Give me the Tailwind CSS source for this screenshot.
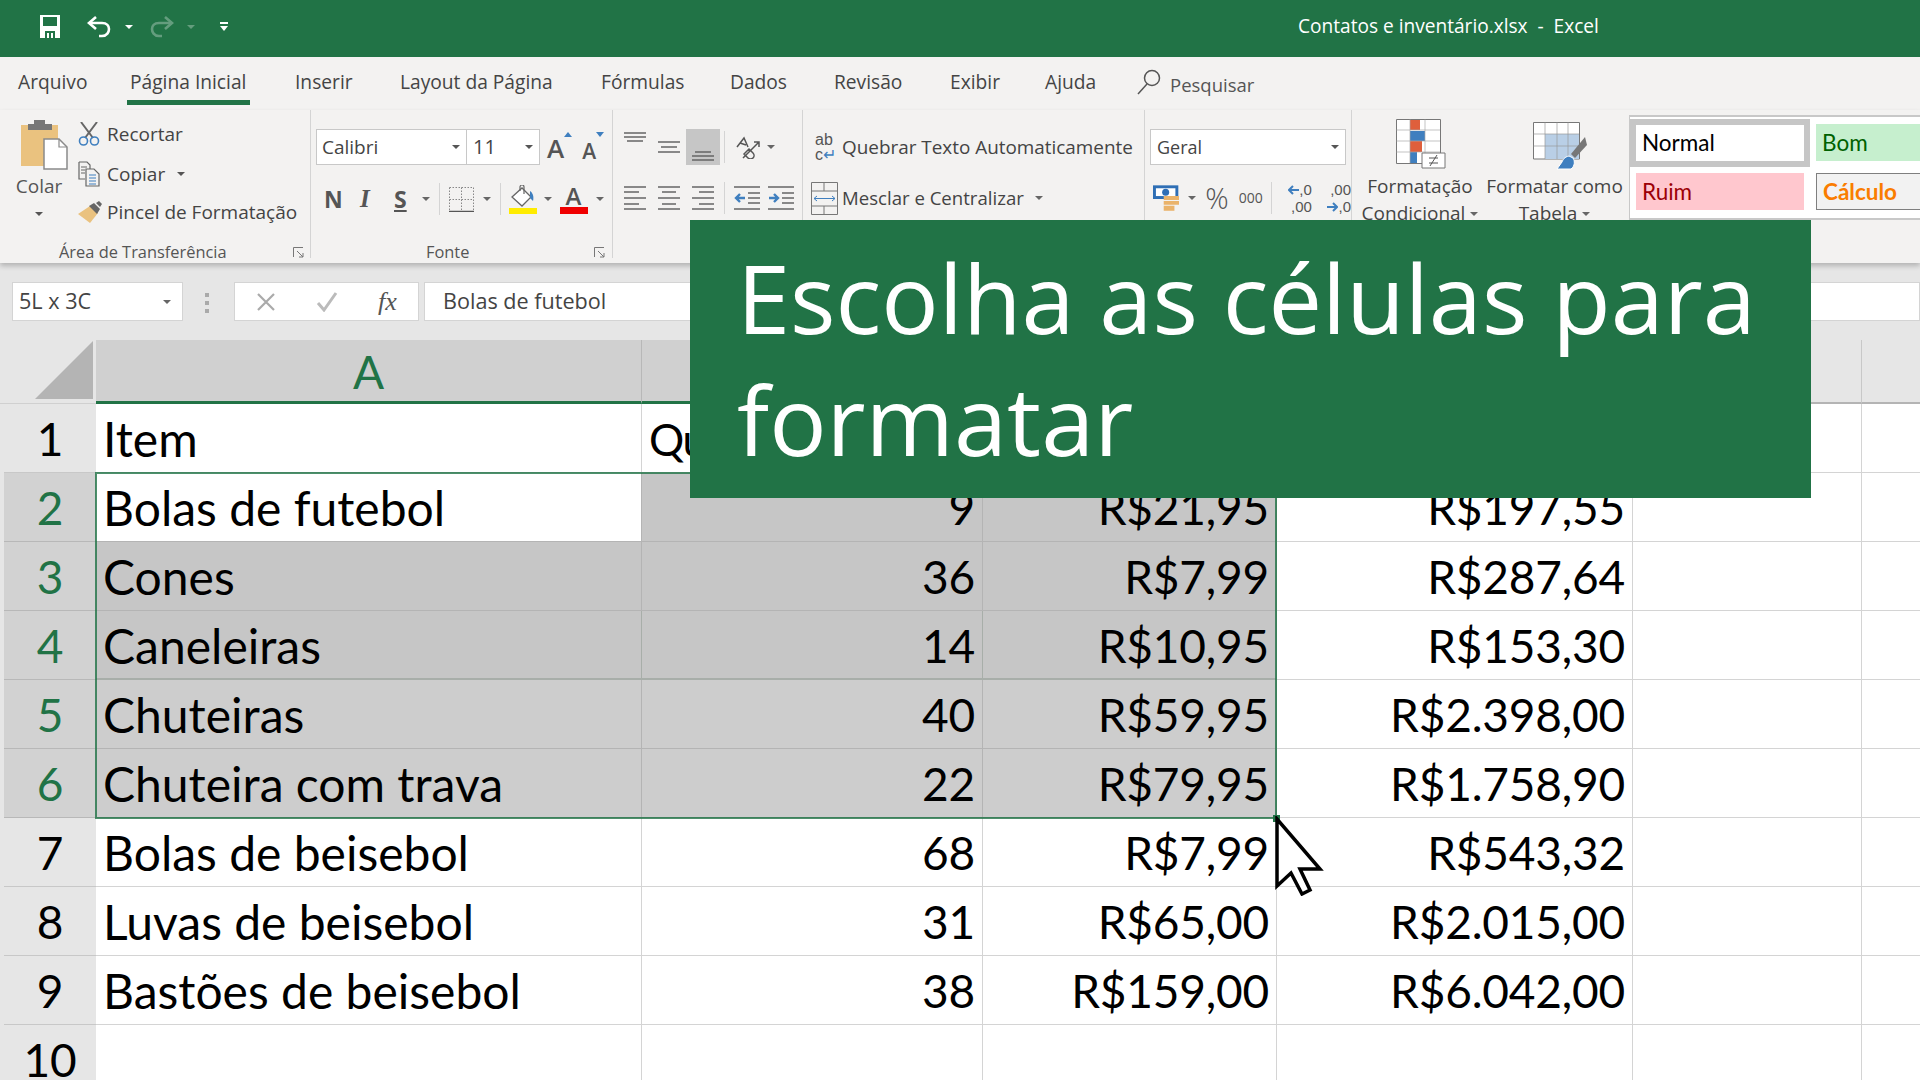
<!DOCTYPE html>
<html lang="pt-BR">
  <head>
    <meta charset="UTF-8" />
    <title>Contatos e inventário.xlsx - Excel</title>
    <script src="https://cdn.jsdelivr.net/npm/@tailwindcss/browser@4"></script>
  </head>
  <body class="w-[1920px] h-[1080px] overflow-hidden relative bg-[#e6e6e6] font-['Open_Sans',sans-serif] text-[#444]">
    <!-- title bar -->
    <header class="h-[57px] pb-[4px] bg-[#217346] flex items-center text-white relative">
      <svg class="ml-[40px] w-[20px] h-[23px]" viewBox="0 0 20 23"><path d="M0 0H20V23H0Z" fill="#fff"/><path d="M3 2H17V11H3Z" fill="#217346"/><path d="M5 16H15V23H5Z" fill="#217346"/><path d="M7 18H9V23H7ZM11 18H13V23H11Z" fill="#fff"/></svg>
      <svg class="ml-[27px] w-[24px] h-[24px]" viewBox="0 0 24 24" fill="none" stroke="#fff" stroke-width="2.6"><path d="M9 2 2 8l7 6"/><path d="M2 8h13c5 0 7 3 7 6s-2 7-7 7h-3"/></svg>
      <span class="ml-[14px] border-x-[4px] border-t-[4px] border-x-transparent border-t-white"></span>
      <svg class="ml-[17px] w-[24px] h-[24px] opacity-30" viewBox="0 0 24 24" fill="none" stroke="#fff" stroke-width="2.6"><path d="M15 2l7 6-7 6"/><path d="M22 8H9c-5 0-7 3-7 6s2 7 7 7h3"/></svg>
      <span class="ml-[13px] border-x-[4px] border-t-[4px] border-x-transparent border-t-white/30"></span>
      <span class="ml-[25px] flex flex-col items-center gap-[2px]"><span class="w-[8px] h-[2px] bg-white"></span><span class="border-x-[4px] border-t-[5px] border-x-transparent border-t-white"></span></span>
      <span class="absolute left-[1298px] top-[14px] text-[19.1px] leading-[25px] whitespace-pre">Contatos e inventário.xlsx  -  Excel</span>
    </header>

    <!-- tabs -->
    <nav class="h-[53px] bg-[#f3f2f1] pl-[18px] flex items-start pt-[12px] text-[19.2px] leading-[26px]">
      <span class="w-[112px]">Arquivo</span>
      <span class="w-[165px] relative">Página Inicial<span class="absolute left-[-3px] w-[123px] top-[31px] h-[5px] bg-[#217346]"></span></span>
      <span class="w-[105px]">Inserir</span>
      <span class="w-[201px]">Layout da Página</span>
      <span class="w-[129px]">Fórmulas</span>
      <span class="w-[104px]">Dados</span>
      <span class="w-[116px]">Revisão</span>
      <span class="w-[95px]">Exibir</span>
      <span class="w-[92px]">Ajuda</span>
      <svg class="w-[24px] h-[26px] mr-[9px]" viewBox="0 0 24 26" fill="none" stroke="#555" stroke-width="1.5"><circle cx="15" cy="9" r="7.5"/><path d="M10 15 1 25"/></svg>
      <span class="mt-[3px] text-[18.5px] text-[#555]">Pesquisar</span>
    </nav>

    <!-- ribbon -->
    <section class="h-[153px] bg-[#f3f2f1] flex shadow-[0_3px_5px_rgba(0,0,0,0.22)] relative text-[19px] leading-[24px]">
      <!-- area de transferencia -->
      <div class="w-[311px] h-[148px] border-r border-[#d4d4d4] flex flex-col">
        <div class="h-[128px] shrink-0 flex">
          <div class="w-[78px] flex flex-col items-center pt-[9px]">
            <svg class="w-[50px] h-[52px] ml-[8px]" viewBox="0 0 50 52"><path d="M3 6H40V47H3Z" fill="#eac27f"/><path d="M10 5H16V1H27V5H34V11H10Z" fill="#777"/><path d="M26 20H41L49 28V50H26Z" fill="#fff" stroke="#8a8a8a" stroke-width="1.5"/><path d="M41 20V28H49" fill="none" stroke="#8a8a8a" stroke-width="1.2"/></svg>
            <span class="mt-[3px] text-[#555]">Colar</span>
            <span class="mt-[14px] border-x-[4px] border-t-[4px] border-x-transparent border-t-[#555]"></span>
          </div>
          <div class="pt-[4px] flex flex-col">
            <div class="h-[40px] flex items-center"><svg class="w-[22px] h-[24px]" viewBox="0 0 22 24" fill="none"><path d="M3 0 15 16M19 0 7 16" stroke="#666" stroke-width="2"/><circle cx="5.5" cy="19" r="4" stroke="#3f7fbf" stroke-width="1.6"/><circle cx="16.5" cy="19" r="4" stroke="#3f7fbf" stroke-width="1.6"/></svg><span class="ml-[7px]">Recortar</span></div>
            <div class="h-[39px] flex items-center"><svg class="w-[22px] h-[26px]" viewBox="0 0 22 26" fill="none" stroke="#666" stroke-width="1.2"><path d="M1 1H9L12 4V8M1 1V18H7"/><path d="M3 6H9M3 9H7M3 12H7"/><path d="M8 8H16L21 13V25H8Z" fill="#f3f2f1"/><path d="M11 14H18M11 17H18M11 20H18M11 23H18" stroke="#3f7fbf"/></svg><span class="ml-[7px]">Copiar</span><span class="ml-[12px] border-x-[4px] border-t-[4px] border-x-transparent border-t-[#555]"></span></div>
            <div class="h-[38px] flex items-center"><svg class="w-[24px] h-[23px]" viewBox="0 0 24 23"><path d="M0 13 12 5l8 7-8 10Z" fill="#eac27f"/><path d="M11 5 16 2l6 6-3 5Z" fill="#666"/><path d="M18 2l3-2 3 3-2 3Z" fill="#666"/></svg><span class="ml-[5px]">Pincel de Formatação</span></div>
          </div>
        </div>
        <div class="flex items-center h-[28px] shrink-0 text-[16.4px] text-[#555]">
          <span class="ml-[59px] w-[234px]">Área de Transferência</span>
          <svg class="w-[11px] h-[11px]" viewBox="0 0 11 11" fill="none" stroke="#777"><path d="M.5 10V.5H10M4 4l6 6M6 10h4V6"/></svg>
        </div>
      </div>

      <!-- fonte -->
      <div class="w-[302px] h-[148px] border-r border-[#d4d4d4] flex flex-col pl-[5px]">
        <div class="h-[128px] shrink-0 pt-[19px]">
          <div class="flex items-start">
            <div class="w-[151px] h-[36px] bg-white border border-[#c8c8c8] flex items-center justify-between pl-[5px] pr-[6px]"><span>Calibri</span><span class="border-x-[4px] border-t-[4px] border-x-transparent border-t-[#555]"></span></div>
            <div class="w-[73px] h-[36px] bg-white border border-l-0 border-[#c8c8c8] flex items-center justify-between pl-[6px] pr-[6px]"><span class="text-[20px]">11</span><span class="border-x-[4px] border-t-[4px] border-x-transparent border-t-[#555]"></span></div>
            <span class="ml-[7px] mt-[2px] text-[26px] leading-[34px] text-[#555] font-semibold">A</span>
            <span class="mt-[3px] border-x-[4px] border-b-[5px] border-x-transparent border-b-[#3f7fbf]"></span>
            <span class="ml-[10px] mt-[7px] text-[21px] leading-[30px] text-[#555] font-semibold">A</span>
            <span class="mt-[3px] border-x-[4px] border-t-[5px] border-x-transparent border-t-[#3f7fbf]"></span>
          </div>
          <div class="mt-[8px] h-[50px] flex items-center text-[#555]">
            <span class="ml-[8px] w-[36px] text-[23px] font-bold">N</span>
            <span class="w-[34px] text-[25px] font-bold italic font-['Liberation_Serif',serif]">I</span>
            <span class="w-[28px] text-[23px] font-bold underline">S</span>
            <span class="border-x-[4px] border-t-[4px] border-x-transparent border-t-[#666]"></span>
            <span class="ml-[9px] w-px h-[32px] bg-[#d4d4d4]"></span>
            <svg class="ml-[9px] w-[25px] h-[25px]" viewBox="0 0 25 25" fill="none" stroke="#888" stroke-dasharray="1.5 1.5"><path d="M.5.5H24.5V24M.5.5V24M12.5.5V24M.5 12.5H24.5"/><path d="M0 24.5H25" stroke="#555" stroke-width="1.5" stroke-dasharray="none"/></svg>
            <span class="ml-[9px] border-x-[4px] border-t-[4px] border-x-transparent border-t-[#666]"></span>
            <span class="ml-[9px] w-px h-[32px] bg-[#d4d4d4]"></span>
            <svg class="ml-[8px] w-[28px] h-[29px]" viewBox="0 0 28 29"><path d="M3 12 13 3l9 9-9 9Z" fill="#fff" stroke="#666" stroke-width="1.3"/><path d="M11 6V2a2 2 0 0 1 4 0V9" fill="none" stroke="#666" stroke-width="1.2"/><path d="M21 6c3 2 4 6 3 10l-3-3Z" fill="#3f7fbf"/><path d="M0 23H28V29H0Z" fill="#ffec00"/></svg>
            <span class="ml-[7px] border-x-[4px] border-t-[4px] border-x-transparent border-t-[#666]"></span>
            <span class="ml-[7px] flex flex-col items-center w-[29px]"><span class="text-[24px] leading-[23px] font-semibold">A</span><span class="w-[28px] h-[7px] bg-[#f00000]"></span></span>
            <span class="ml-[8px] border-x-[4px] border-t-[4px] border-x-transparent border-t-[#666]"></span>
          </div>
        </div>
        <div class="flex items-center h-[28px] shrink-0 text-[16.4px] text-[#555]">
          <span class="ml-[110px] w-[168px]">Fonte</span>
          <svg class="w-[11px] h-[11px]" viewBox="0 0 11 11" fill="none" stroke="#777"><path d="M.5 10V.5H10M4 4l6 6M6 10h4V6"/></svg>
        </div>
      </div>

      <!-- alinhamento -->
      <div class="w-[190px] h-[148px] border-r border-[#d4d4d4] pt-[19px] pl-[5px]">
        <div class="flex items-center h-[36px]">
          <span class="w-[34px] h-[36px] flex items-start justify-center pt-[3px]"><svg class="w-[22px] h-[12px]" viewBox="0 0 22 12" stroke="#666" stroke-width="1.3"><path d="M0 1H22M0 5H22M3 9H19"/></svg></span>
          <span class="w-[34px] h-[36px] flex items-center justify-center"><svg class="w-[22px] h-[12px]" viewBox="0 0 22 12" stroke="#666" stroke-width="1.3"><path d="M0 1H22M3 6H19M0 11H22"/></svg></span>
          <span class="w-[34px] h-[36px] bg-[#c6c6c6] flex items-end justify-center pb-[4px]"><svg class="w-[22px] h-[12px]" viewBox="0 0 22 12" stroke="#666" stroke-width="1.3"><path d="M3 3H19M0 7H22M0 11H22"/></svg></span>
          <span class="ml-[4px] w-px h-[32px] bg-[#d4d4d4]"></span>
          <svg class="ml-[11px] w-[24px] h-[24px]" viewBox="0 0 24 24" fill="none" stroke="#555" stroke-width="1.5"><path d="M7 23 23 7M18 7h5v5"/><path d="M1 12 8 3l4 9M4 8l6 2"/><path d="M8 19l5-5 4 4a3 3 0 0 1-5 5Z"/></svg>
          <span class="ml-[7px] border-x-[4px] border-t-[4px] border-x-transparent border-t-[#666]"></span>
        </div>
        <div class="mt-[8px] h-[50px] flex items-center">
          <span class="w-[34px] flex justify-center"><svg class="w-[22px] h-[24px]" viewBox="0 0 22 24" stroke="#666" stroke-width="1.3"><path d="M0 1H22M0 6H15M0 12H22M0 18H15M0 23H22"/></svg></span>
          <span class="w-[34px] flex justify-center"><svg class="w-[22px] h-[24px]" viewBox="0 0 22 24" stroke="#666" stroke-width="1.3"><path d="M0 1H22M4 6H18M0 12H22M4 18H18M0 23H22"/></svg></span>
          <span class="w-[34px] flex justify-center"><svg class="w-[22px] h-[24px]" viewBox="0 0 22 24" stroke="#666" stroke-width="1.3"><path d="M0 1H22M7 6H22M0 12H22M7 18H22M0 23H22"/></svg></span>
          <span class="ml-[4px] w-px h-[32px] bg-[#d4d4d4]"></span>
          <svg class="ml-[9px] w-[26px] h-[24px]" viewBox="0 0 26 24" fill="none"><path d="M0 1H26M14 7H26M14 12H26M14 17H26M0 23H26" stroke="#666" stroke-width="1.3"/><path d="M11 12H3M6 8l-4 4 4 4" stroke="#3f7fbf" stroke-width="2.4"/></svg>
          <svg class="ml-[8px] w-[26px] h-[24px]" viewBox="0 0 26 24" fill="none"><path d="M0 1H26M14 7H26M14 12H26M14 17H26M0 23H26" stroke="#666" stroke-width="1.3"/><path d="M1 12H9M6 8l4 4-4 4" stroke="#3f7fbf" stroke-width="2.4"/></svg>
        </div>
      </div>

      <!-- quebrar / mesclar -->
      <div class="w-[342px] h-[148px] border-r border-[#d4d4d4] pl-[8px] pt-[19px]">
        <div class="h-[36px] flex items-center"><span class="w-[31px] pl-[4px] text-[16px] leading-[15px] font-['Liberation_Sans',sans-serif] text-[#555]">ab<br />c<span class="text-[#3f7fbf]">↵</span></span><span class="text-[18.9px]">Quebrar Texto Automaticamente</span></div>
        <div class="mt-[8px] h-[50px] flex items-center"><svg class="w-[27px] h-[33px] mr-[4px]" viewBox="0 0 27 33" fill="none" stroke="#777"><path d="M.5.5H26.5V32.5H.5ZM.5 9H26.5M.5 24H26.5M13 .5V9M13 24V32.5"/><path d="M3 16.5H24M6 14l-3 2.5L6 19M21 14l3 2.5-3 2.5" stroke="#3f7fbf"/></svg><span class="text-[18.6px]">Mesclar e Centralizar</span><span class="ml-[11px] border-x-[4px] border-t-[4px] border-x-transparent border-t-[#666]"></span></div>
      </div>

      <!-- numero -->
      <div class="w-[207px] h-[148px] border-r border-[#d4d4d4] pl-[5px] pt-[19px]">
        <div class="w-[196px] h-[36px] bg-white border border-[#c8c8c8] flex items-center justify-between pl-[6px] pr-[6px] text-[18px]"><span>Geral</span><span class="border-x-[4px] border-t-[4px] border-x-transparent border-t-[#555]"></span></div>
        <div class="mt-[8px] h-[50px] flex items-center text-[#555]">
          <svg class="ml-[3px] w-[27px] h-[26px]" viewBox="0 0 27 26"><path d="M0 0H26V14H0Z" fill="#2f6fb5"/><path d="M3 3H23V11H3Z" fill="#fff"/><circle cx="13" cy="7" r="3.6" fill="#2f6fb5"/><path d="M11 11H27V15H11ZM11 16H27V20H11ZM11 21H22V26H11Z" fill="#eab36a"/></svg>
          <span class="ml-[9px] border-x-[4px] border-t-[4px] border-x-transparent border-t-[#666]"></span>
          <span class="ml-[9px] text-[29px] leading-[34px] font-light">%</span>
          <span class="ml-[10px] text-[14px]">000</span>
          <span class="ml-[8px] w-px h-[32px] bg-[#d4d4d4]"></span>
          <div class="ml-[7px] w-[34px] text-[15px] leading-[17px] font-['Liberation_Sans',sans-serif] flex flex-col items-end">
            <span class="flex items-center"><svg class="w-[11px] h-[10px]" viewBox="0 0 11 10" fill="none" stroke="#3f7fbf" stroke-width="2"><path d="M11 5H2M5 1 1 5l4 4"/></svg>,0</span>
            <span>,00</span>
          </div>
          <div class="ml-[8px] w-[32px] text-[15px] leading-[17px] font-['Liberation_Sans',sans-serif] flex flex-col items-end">
            <span>,00</span>
            <span class="flex items-center"><svg class="w-[11px] h-[10px]" viewBox="0 0 11 10" fill="none" stroke="#3f7fbf" stroke-width="2"><path d="M0 5H9M6 1l4 4-4 4"/></svg>,0</span>
          </div>
        </div>
      </div>

      <!-- estilos -->
      <div class="w-[136px] pt-[9px] flex flex-col items-center text-center leading-[27px]">
        <svg class="w-[50px] h-[50px] mb-[4px] ml-[2px]" viewBox="0 0 50 50"><path d="M.5.5H44.5V44.5H.5Z" fill="#fff" stroke="#777"/><path d="M14 1H24V11H14ZM14 22H26V33H14Z" fill="#df5f3c"/><path d="M14 12H29V22H14ZM14 33H21V44H14Z" fill="#3f7fbf"/><path d="M14 .5V44M29 .5V44M.5 11H44M.5 22H44M.5 33H44" fill="none" stroke="#aaa" stroke-width=".7"/><path d="M26 34H49V49H26Z" fill="#fff" stroke="#777"/><path d="M33 39H42M33 44H42M41 36 34 47" stroke="#555" fill="none"/></svg>
        <span class="whitespace-nowrap">Formatação</span>
        <span class="flex items-center gap-[5px] whitespace-nowrap">Condicional<span class="border-x-[4px] border-t-[4px] border-x-transparent border-t-[#666]"></span></span>
      </div>
      <div class="w-[133px] pt-[12px] flex flex-col items-center text-center leading-[27px]">
        <svg class="w-[54px] h-[48px] mb-[3px] ml-[11px]" viewBox="0 0 54 48"><path d="M.5.5H46.5V37H.5Z" fill="#fff" stroke="#777"/><path d="M12 12H46V37H12Z" fill="#b9cfe6"/><path d="M12 .5V37M24 .5V37M35 .5V37M.5 12H46M.5 24H46" fill="none" stroke="#999" stroke-width=".7"/><path d="M52 15 38 32l4 4 12-13Z" fill="#777"/><path d="M36 34c-5 1-6 4-7 6l-5 7h14c4-3 4-8 2-11Z" fill="#3f7fbf" stroke="#fff"/></svg>
        <span class="whitespace-nowrap">Formatar como</span>
        <span class="flex items-center gap-[5px] whitespace-nowrap">Tabela<span class="border-x-[4px] border-t-[4px] border-x-transparent border-t-[#666]"></span></span>
      </div>
      <div class="ml-[8px] mt-[5px] flex-1 min-w-0 h-[105px] bg-white border-t-2 border-l border-b-2 border-[#c8c8c8] text-[22.5px] font-['Lato',sans-serif] overflow-hidden">
        <div class="flex pt-[2px]">
          <div class="w-[180px] h-[48px] shrink-0 border-[6px] border-[#c6c6c6] bg-white text-black pl-[6px] flex items-center">Normal</div>
          <div class="ml-[6px] mt-[5px] w-[120px] h-[37px] shrink-0 bg-[#c6efce] text-[#006100] pl-[6px] flex items-center">Bom</div>
        </div>
        <div class="flex mt-[6px]">
          <div class="ml-[6px] w-[168px] h-[37px] shrink-0 bg-[#ffc7ce] text-[#9c0006] pl-[6px] flex items-center">Ruim</div>
          <div class="ml-[12px] w-[120px] h-[37px] shrink-0 bg-[#f2f2f2] border border-[#7f7f7f] text-[#fa7d00] font-bold pl-[6px] flex items-center">Cálculo</div>
        </div>
      </div>
    </section>

    <!-- barra de formula -->
    <div class="h-[77px] pt-[19px] pl-[12px] flex items-start text-[21.6px]">
      <div class="w-[171px] h-[39px] bg-white border border-[#d4d4d4] flex items-center justify-between pl-[6px] pr-[11px]"><span>5L x 3C</span><span class="border-x-[4px] border-t-[4px] border-x-transparent border-t-[#666]"></span></div>
      <span class="ml-[22px] mr-[25px] mt-[11px] flex flex-col gap-[4px]"><span class="w-[4px] h-[4px] bg-[#aaa]"></span><span class="w-[4px] h-[4px] bg-[#aaa]"></span><span class="w-[4px] h-[4px] bg-[#aaa]"></span></span>
      <div class="w-[185px] h-[39px] bg-white border border-[#d4d4d4] flex items-center pl-[21px]">
        <svg class="w-[20px] h-[20px]" viewBox="0 0 20 20" stroke="#aaa" stroke-width="2.2"><path d="M2 2 18 18M18 2 2 18"/></svg>
        <svg class="ml-[40px] w-[22px] h-[20px]" viewBox="0 0 22 20" fill="none" stroke="#bbb" stroke-width="3"><path d="M2 11 8 18 20 1"/></svg>
        <span class="ml-[40px] font-['Liberation_Serif',serif] italic text-[#555] text-[26px] leading-[28px]">fx</span>
      </div>
      <div class="ml-[5px] flex-1 h-[39px] bg-white border border-[#d4d4d4] flex items-center pl-[18px]">Bolas de futebol</div>
    </div>

    <!-- planilha -->
    <main class="font-['Lato',sans-serif] text-black text-[46px] leading-[70px] tracking-[-0.2px]">
      <div class="grid grid-cols-[96px_546px_341px_294px_356px_229px_58px] grid-rows-[64px]">
        <div class="flex items-end justify-end pr-[3px] pb-[4px] border-b border-[#d0d0d0]"><span class="border-l-[58px] border-b-[58px] border-l-transparent border-b-[#b4b4b4]"></span></div>
        <div class="bg-[#d0d0d0] border-r border-[#b8b8b8] border-b-[3px] border-b-[#217346] text-[#217346] text-center leading-[64px]">A</div>
        <div class="bg-[#d0d0d0] border-r border-[#b8b8b8] border-b-[3px] border-b-[#217346]"></div>
        <div class="bg-[#d0d0d0] border-r border-[#b8b8b8] border-b-[3px] border-b-[#217346]"></div>
        <div class="bg-[#e6e6e6] border-r border-[#c8c8c8] border-b-[2px] border-b-[#b4b4b4]"></div>
        <div class="bg-[#e6e6e6] border-r border-[#c8c8c8] border-b-[2px] border-b-[#b4b4b4]"></div>
        <div class="bg-[#e6e6e6] border-b-[2px] border-b-[#b4b4b4]"></div>
      </div>
      <div class="grid grid-cols-[96px_546px_341px_294px_356px_229px_58px] auto-rows-[69px]">
        <div class="ml-[4px] text-center border-b border-[#c8c8c8]">1</div>
        <div class="bg-white border-r border-b border-[#d4d4d4] pl-[7px] text-[48px] tracking-normal">Item</div>
        <div class="bg-white border-r border-b border-[#d4d4d4] pl-[7px] text-[44px] tracking-[-1.5px]">Qu</div>
        <div class="bg-white border-r border-b border-[#d4d4d4]"></div>
        <div class="bg-white border-r border-b border-[#d4d4d4]"></div>
        <div class="bg-white border-r border-b border-[#d4d4d4]"></div>
        <div class="bg-white border-b border-[#d4d4d4]"></div>

        <div class="ml-[4px] bg-[#d2d2d2] text-[#217346] text-center border-b border-[#b8b8b8]">2</div>
        <div class="bg-white border-r border-b border-[#b4b4b4] pl-[7px] text-[48px] tracking-normal">Bolas de futebol</div>
        <div class="bg-[#c6c6c6] border-r border-b border-[#b4b4b4] pr-[7px] text-right">9</div>
        <div class="bg-[#c6c6c6] border-r border-b border-[#b4b4b4] pr-[7px] text-right">R$21,95</div>
        <div class="bg-white border-r border-b border-[#d4d4d4] pr-[7px] text-right">R$197,55</div>
        <div class="bg-white border-r border-b border-[#d4d4d4]"></div>
        <div class="bg-white border-b border-[#d4d4d4]"></div>

        <div class="ml-[4px] bg-[#d2d2d2] text-[#217346] text-center border-b border-[#b8b8b8]">3</div>
        <div class="bg-[#c6c6c6] border-r border-b border-[#b4b4b4] pl-[7px] text-[48px] tracking-normal">Cones</div>
        <div class="bg-[#c6c6c6] border-r border-b border-[#b4b4b4] pr-[7px] text-right">36</div>
        <div class="bg-[#c6c6c6] border-r border-b border-[#b4b4b4] pr-[7px] text-right">R$7,99</div>
        <div class="bg-white border-r border-b border-[#d4d4d4] pr-[7px] text-right">R$287,64</div>
        <div class="bg-white border-r border-b border-[#d4d4d4]"></div>
        <div class="bg-white border-b border-[#d4d4d4]"></div>

        <div class="ml-[4px] bg-[#d2d2d2] text-[#217346] text-center border-b border-[#b8b8b8]">4</div>
        <div class="bg-[#c6c6c6] border-r border-b-2 border-[#a8aea9] pl-[7px] text-[48px] tracking-normal">Caneleiras</div>
        <div class="bg-[#c6c6c6] border-r border-b-2 border-[#a8aea9] pr-[7px] text-right">14</div>
        <div class="bg-[#c6c6c6] border-r border-b-2 border-[#a8aea9] pr-[7px] text-right">R$10,95</div>
        <div class="bg-white border-r border-b border-[#d4d4d4] pr-[7px] text-right">R$153,30</div>
        <div class="bg-white border-r border-b border-[#d4d4d4]"></div>
        <div class="bg-white border-b border-[#d4d4d4]"></div>

        <div class="ml-[4px] bg-[#d2d2d2] text-[#217346] text-center border-b border-[#b8b8b8]">5</div>
        <div class="bg-[#cdcdcd] border-r border-b border-[#b4b4b4] pl-[7px] text-[48px] tracking-normal">Chuteiras</div>
        <div class="bg-[#cdcdcd] border-r border-b border-[#b4b4b4] pr-[7px] text-right">40</div>
        <div class="bg-[#cdcdcd] border-r border-b border-[#b4b4b4] pr-[7px] text-right">R$59,95</div>
        <div class="bg-white border-r border-b border-[#d4d4d4] pr-[7px] text-right">R$2.398,00</div>
        <div class="bg-white border-r border-b border-[#d4d4d4]"></div>
        <div class="bg-white border-b border-[#d4d4d4]"></div>

        <div class="ml-[4px] bg-[#d2d2d2] text-[#217346] text-center border-b border-[#b8b8b8]">6</div>
        <div class="bg-[#cdcdcd] border-r border-b border-[#b4b4b4] pl-[7px] text-[48px] tracking-normal">Chuteira com trava</div>
        <div class="bg-[#cdcdcd] border-r border-b border-[#b4b4b4] pr-[7px] text-right">22</div>
        <div class="bg-[#cdcdcd] border-r border-b border-[#b4b4b4] pr-[7px] text-right">R$79,95</div>
        <div class="bg-white border-r border-b border-[#d4d4d4] pr-[7px] text-right">R$1.758,90</div>
        <div class="bg-white border-r border-b border-[#d4d4d4]"></div>
        <div class="bg-white border-b border-[#d4d4d4]"></div>

        <div class="ml-[4px] text-center border-b border-[#c8c8c8]">7</div>
        <div class="bg-white border-r border-b border-[#d4d4d4] pl-[7px] text-[48px] tracking-normal">Bolas de beisebol</div>
        <div class="bg-white border-r border-b border-[#d4d4d4] pr-[7px] text-right">68</div>
        <div class="bg-white border-r border-b border-[#d4d4d4] pr-[7px] text-right">R$7,99</div>
        <div class="bg-white border-r border-b border-[#d4d4d4] pr-[7px] text-right">R$543,32</div>
        <div class="bg-white border-r border-b border-[#d4d4d4]"></div>
        <div class="bg-white border-b border-[#d4d4d4]"></div>

        <div class="ml-[4px] text-center border-b border-[#c8c8c8]">8</div>
        <div class="bg-white border-r border-b border-[#d4d4d4] pl-[7px] text-[48px] tracking-normal">Luvas de beisebol</div>
        <div class="bg-white border-r border-b border-[#d4d4d4] pr-[7px] text-right">31</div>
        <div class="bg-white border-r border-b border-[#d4d4d4] pr-[7px] text-right">R$65,00</div>
        <div class="bg-white border-r border-b border-[#d4d4d4] pr-[7px] text-right">R$2.015,00</div>
        <div class="bg-white border-r border-b border-[#d4d4d4]"></div>
        <div class="bg-white border-b border-[#d4d4d4]"></div>

        <div class="ml-[4px] text-center border-b border-[#c8c8c8]">9</div>
        <div class="bg-white border-r border-b border-[#d4d4d4] pl-[7px] text-[48px] tracking-normal">Bastões de beisebol</div>
        <div class="bg-white border-r border-b border-[#d4d4d4] pr-[7px] text-right">38</div>
        <div class="bg-white border-r border-b border-[#d4d4d4] pr-[7px] text-right">R$159,00</div>
        <div class="bg-white border-r border-b border-[#d4d4d4] pr-[7px] text-right">R$6.042,00</div>
        <div class="bg-white border-r border-b border-[#d4d4d4]"></div>
        <div class="bg-white border-b border-[#d4d4d4]"></div>

        <div class="ml-[4px] text-center">10</div>
        <div class="bg-white border-r border-[#d4d4d4]"></div>
        <div class="bg-white border-r border-[#d4d4d4]"></div>
        <div class="bg-white border-r border-[#d4d4d4]"></div>
        <div class="bg-white border-r border-[#d4d4d4]"></div>
        <div class="bg-white border-r border-[#d4d4d4]"></div>
        <div class="bg-white"></div>
      </div>
    </main>

    <!-- selecao, por cima das celulas -->
    <div class="absolute left-[95px] top-[472px] w-[1182px] h-[347px] border-2 border-[#217346]/80 pointer-events-none"></div>
    <div class="absolute left-[1273px] top-[815px] w-[7px] h-[7px] bg-[#217346]"></div>

    <!-- cursor -->
    <svg class="absolute left-[1274px] top-[816px] w-[50px] h-[80px]" viewBox="0 0 50 80"><path d="M3 3V70L17 57 28 78 36 74 26 53H46Z" fill="#fff" stroke="#000" stroke-width="3.5"/></svg>

    <!-- legenda -->
    <div class="absolute left-[690px] top-[220px] w-[1121px] h-[278px] bg-[#217346] text-white pl-[47px] pt-[16px] text-[95.5px] leading-[122px] font-['Open_Sans',sans-serif]">Escolha as células para<br />formatar</div>
  </body>
</html>
